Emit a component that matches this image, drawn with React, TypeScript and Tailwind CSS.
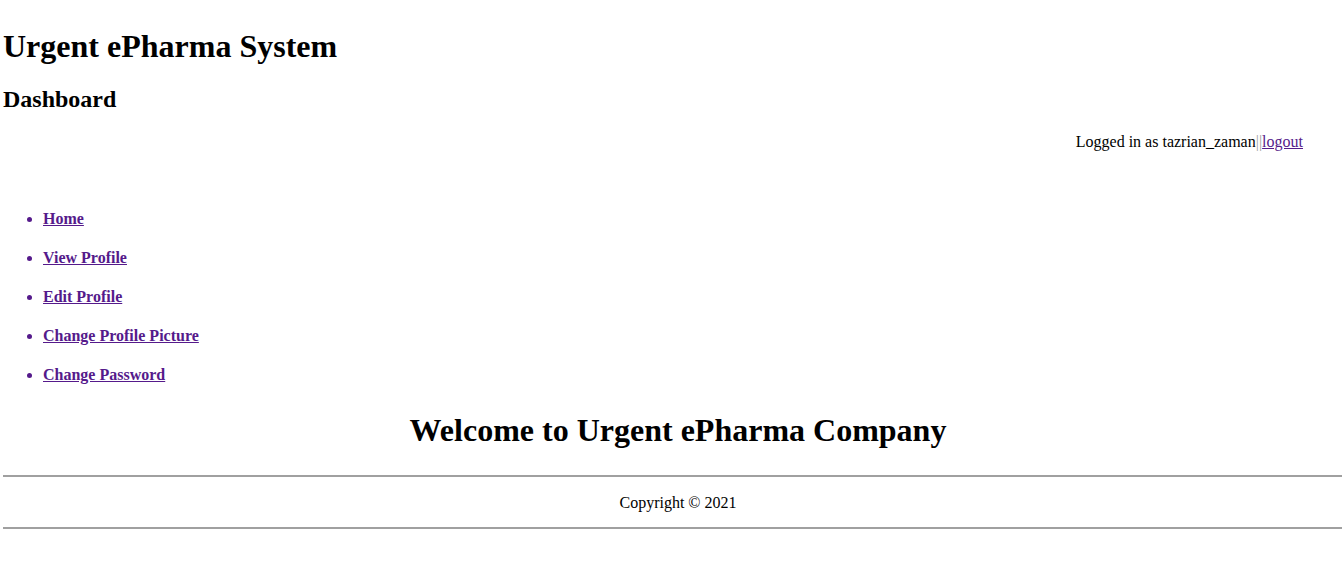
export default function App() {
  const links = ["Home", "View Profile", "Edit Profile", "Change Profile Picture", "Change Password"];
  return (
    <div className="w-[1342px] h-[573px] overflow-hidden bg-white text-black" style={{ fontFamily: '"Liberation Serif", "Times New Roman", serif' }}>
      <div className="ml-[3px] pt-[3px] w-[1350px]">
        <h1 className="text-[32px] font-bold leading-[37px] mt-[25px] mb-[20px]">Urgent ePharma System</h1>
        <h2 className="text-[24px] font-bold leading-[28px] mb-[20px]">Dashboard</h2>
        <div className="flex justify-end pr-[50px] text-[16px] leading-[18px] mt-[14px]">
          <span>Logged in as tazrian_zaman</span>
          <span className="text-[#a0a0a0]">||</span>
          <a href="#" className="text-[#551a8b] underline">logout</a>
        </div>
        <ul className="list-disc pl-[40px] mt-[59px] text-[#551a8b]">
          {links.map((l) => (
            <li key={l} className="text-[16px] font-bold leading-[18px] mb-[21px]">
              <a href="#" className="underline">{l}</a>
            </li>
          ))}
        </ul>
        <h1 className="text-[32px] font-bold leading-[37px] text-center mt-[28px]">Welcome to Urgent ePharma Company</h1>
        <hr className="mt-[26px] border-0 border-t-2 border-[#a0a0a0]" />
        <p className="text-center text-[16px] leading-[18px] mt-[17px]">Copyright © 2021</p>
        <hr className="mt-[15px] border-0 border-t-2 border-[#a0a0a0]" />
      </div>
    </div>
  );
}
